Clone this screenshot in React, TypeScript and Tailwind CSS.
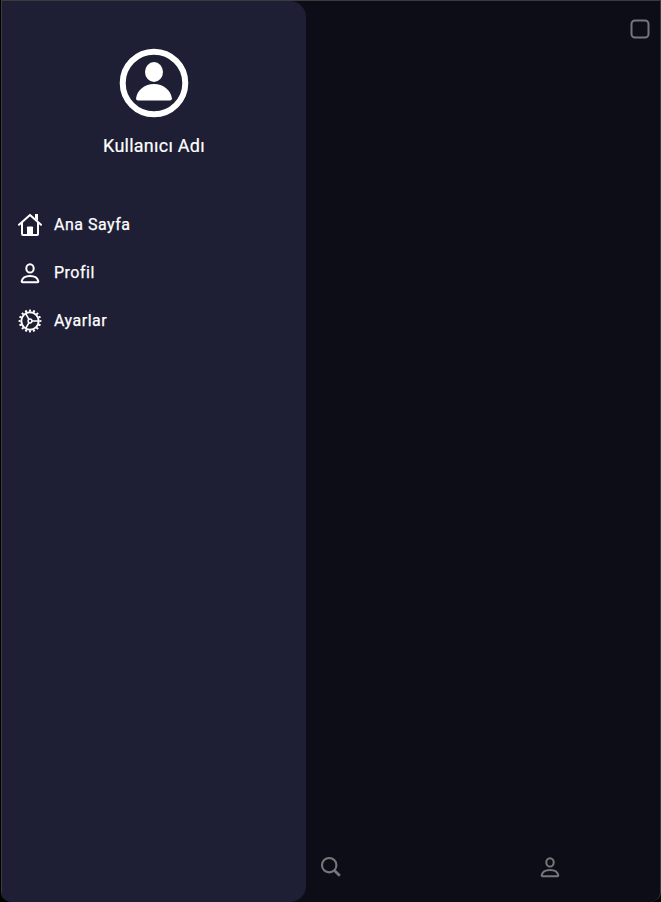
import React from "react";

function PersonIcon({ size }: { size: number }) {
  return (
    <svg width={size} height={size} viewBox="0 0 24 24" fill="none" stroke="currentColor" strokeWidth="2">
      <ellipse cx="12" cy="7.4" rx="3.7" ry="4.1" />
      <path d="M4.6 21.2h14.8c.7 0 1-.5.9-1.1-.7-3.5-4.1-5.2-8.3-5.2s-7.6 1.7-8.3 5.2c-.1.6.2 1.1.9 1.1Z" />
    </svg>
  );
}

function HomeIcon() {
  return (
    <svg width="24" height="24" viewBox="0 0 24 24" fill="none" stroke="currentColor" strokeWidth="2" strokeLinecap="round" strokeLinejoin="round">
      <path d="M1 11.8 12 1.9l11 9.9M4 10v11a1 1 0 0 0 1 1h14a1 1 0 0 0 1-1V10" />
      <path d="M17 1h3v7l-3-2.8Z" fill="currentColor" stroke="none" />
      <path d="M9 14.2a.8.8 0 0 1 .8-.8h4.4a.8.8 0 0 1 .8.8V22H9Z" fill="currentColor" stroke="none" />
    </svg>
  );
}

function CogIcon() {
  return (
    <svg width="24" height="24" viewBox="0 0 24 24" fill="none" stroke="currentColor" strokeWidth="2">
      <circle cx="12" cy="12" r="8.7" />
      <circle cx="12" cy="12" r="10.4" strokeWidth="2" pathLength="36" strokeDasharray="1.1 1.15" strokeDashoffset="0.55" />
      <circle cx="12" cy="12" r="1.9" strokeWidth="1.5" />
      <path d="M14 12h7M11 10.3 7.7 4.6M11 13.7l-3.3 5.7" strokeWidth="1.6" />
    </svg>
  );
}

function Item({ icon, label }: { icon: React.ReactNode; label: string }) {
  return (
    <div className="flex h-12 items-center gap-3">
      {icon}
      <span className="text-base tracking-[0.5px] [-webkit-text-stroke:0.25px_currentColor]">{label}</span>
    </div>
  );
}

export default function App() {
  return (
    <div className="h-[902px] w-[661px] bg-black pl-px font-[Roboto,sans-serif] text-white">
      <div className="flex h-full overflow-hidden rounded-b-[10px] border-x border-t border-[#3b3b3d] bg-[#0d0d18]">
        <aside className="flex h-full w-[304px] shrink-0 flex-col rounded-r-2xl bg-[#1e1e35]">
          <div className="flex flex-col items-center pt-[47px]">
            <svg width="70" height="70" viewBox="0 0 70 70" fill="currentColor">
              <circle cx="35" cy="35" r="31.3" fill="none" stroke="currentColor" strokeWidth="6" />
              <ellipse cx="35" cy="24" rx="9" ry="10" />
              <path d="M19 52.5h32c1.4 0 2.2-1.1 1.9-2.4C51.5 41.7 44.2 36 35 36s-16.5 5.7-17.9 14.1c-.3 1.3.5 2.4 1.9 2.4Z" />
            </svg>
            <span className="mt-[14px] text-lg leading-7 tracking-[0.25px] [-webkit-text-stroke:0.2px_currentColor]">Kullanıcı Adı</span>
          </div>
          <nav className="mt-[41px] flex flex-col pl-4">
            <Item label="Ana Sayfa" icon={<HomeIcon />} />
            <Item label="Profil" icon={<PersonIcon size={24} />} />
            <Item label="Ayarlar" icon={<CogIcon />} />
          </nav>
        </aside>
        <main className="flex flex-1 flex-col justify-between text-[#777779]">
          <div className="flex justify-end pt-[16px] pr-2">
            <svg width="24" height="24" viewBox="0 0 24 24" fill="none" stroke="currentColor" strokeWidth="2">
              <rect x="3.5" y="3.5" width="17" height="17" rx="3.5" />
            </svg>
          </div>
          <div className="flex justify-between pr-[98px] pb-[23px] pl-[13px]">
            <svg width="24" height="24" viewBox="0 0 24 24" fill="none" stroke="currentColor">
              <circle cx="10.2" cy="10.2" r="7.2" strokeWidth="2.1" />
              <path d="m15.2 15.2 5.6 5.6" strokeWidth="2.7" />
            </svg>
            <PersonIcon size={24} />
          </div>
        </main>
      </div>
    </div>
  );
}
